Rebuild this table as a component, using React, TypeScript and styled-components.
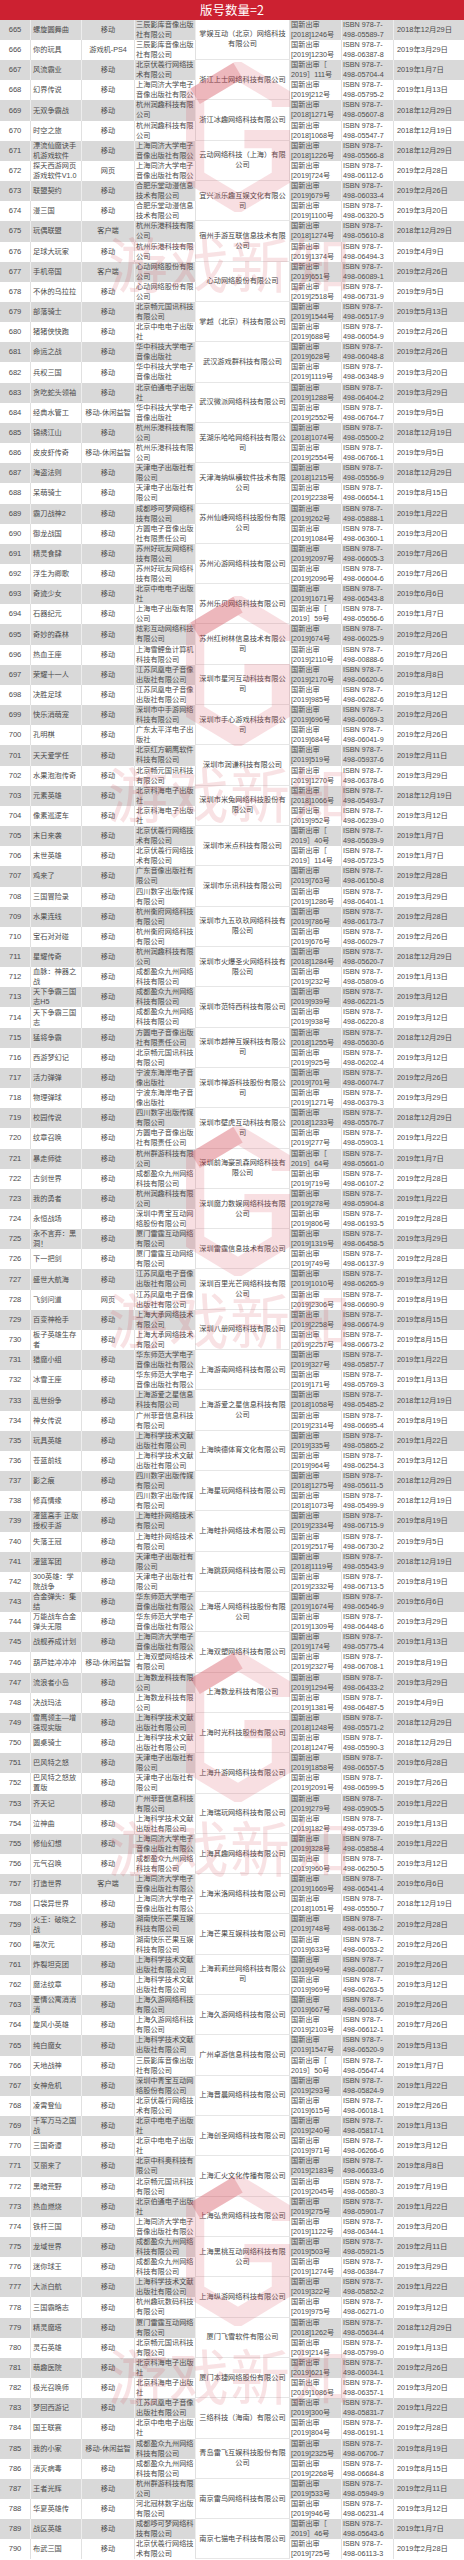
import React from 'react'
import styled, { createGlobalStyle } from 'styled-components'

const GlobalStyle = createGlobalStyle`
  * { box-sizing: border-box; }
  body {
    margin: 0;
    background: #fff;
    font-family: "Liberation Sans", "Noto Sans CJK SC", sans-serif;
  }
`

// no|name|platform|publisher|approval|isbn|date
const DATA = `
665|螺旋圆舞曲|移动|三辰影库音像出版社有限公司|[2018]1246号|05589-7|2018/12/29
666|你的玩具|游戏机-PS4|三辰影库音像出版社有限公司|[2019]1230号|06387-8|2019/3/29
667|风流霸业|移动|北京伏羲行网络技术有限公司|~2019］111号|05704-4|2019/1/7
668|幻界传说|移动|上海同济大学电子音像出版社有限公司|[2019]212号|05795-2|2019/1/13
669|无双争霸战|移动|杭州润趣科技有限公司|[2018]1271号|05607-8|2018/12/29
670|时空之旅|移动|杭州润趣科技有限公司|[2018]1068号|05547-7|2018/12/19
671|漂流仙魔诀手机游戏软件|移动|上海同济大学电子音像出版社有限公司|[2018]1226号|05566-8|2018/12/29
672|探天西游网页游戏软件V1.0|网页|上海同济大学电子音像出版社有限公司|[2019]724号|06112-6|2019/2/28
673|联盟契约|移动|合肥乐堂动漫信息技术有限公司|[2019]679号|06033-4|2019/2/26
674|漫三国|移动|合肥乐堂动漫信息技术有限公司|[2019]1100号|06320-5|2019/3/20
675|玩偶联盟|客户端|杭州乐港科技有限公司|[2018]1274号|05610-8|2018/12/29
676|足球大玩家|移动|杭州乐港科技有限公司|[2019]1374号|06494-3|2019/4/9
677|手机帝国|客户端|心动网络股份有限公司|[2019]651号|06089-1|2019/2/26
678|不休的乌拉拉|移动|心动网络股份有限公司|[2019]2518号|06731-9|2019/9/5
679|部落骑士|移动|北京畅元国讯科技有限公司|[2019]1544号|06517-9|2019/5/13
680|猪猪侠快跑|移动|北京中电电子出版社|[2019]688号|06054-9|2019/2/26
681|命运之战|移动|华中科技大学电子音像出版社|[2019]628号|06048-8|2019/2/26
682|兵权三国|移动|华中科技大学电子音像出版社|[2019]1119号|06348-9|2019/3/20
683|贪吃蛇头领袖|移动|北京伯通电子出版社|[2019]1288号|06404-2|2019/3/29
684|经典水管工|移动-休闲益智|华中科技大学电子音像出版社|[2019]2552号|06764-7|2019/9/5
685|锦绣江山|移动|杭州乐港科技有限公司|[2018]1074号|05500-2|2018/12/19
686|皮皮虾传奇|移动-休闲益智|杭州乐港科技有限公司|[2019]2554号|06766-1|2019/9/5
687|海盗法则|移动|天津电子出版社有限公司|[2018]1215号|05556-9|2018/12/29
688|呆萌骑士|移动|天津电子出版社有限公司|[2019]2238号|06654-1|2019/8/15
689|霸刀战神2|移动|成都哆可梦网络科技有限公司|[2019]262号|05888-1|2019/1/22
690|御龙战国|移动|方圆电子音像出版社有限责任公司|[2019]1084号|06360-1|2019/3/20
691|精灵食肆|移动|苏州好玩友网络科技有限公司|[2019]2097号|06605-3|2019/7/26
692|浮生为卿歌|移动|苏州好玩友网络科技有限公司|[2019]2096号|06604-6|2019/7/26
693|奇迹少女|移动|北京中电电子出版社|[2019]1671号|06543-8|2019/6/6
694|石器纪元|移动|上海电子出版有限公司|~2019］59号|05656-6|2019/1/7
695|奇妙的森林|移动|炫彩互动网络科技有限公司|[2019]674号|06025-9|2019/2/26
696|热血王座|移动|上海雪鲤鱼计算机科技有限公司|[2019]2110号|00888-6|2019/7/26
697|荣耀十一人|移动|江苏凤凰电子音像出版社有限公司|[2019]2170号|06620-6|2019/8/8
698|决胜足球|移动|江苏凤凰电子音像出版社有限公司|[2019]985号|06282-6|2019/3/12
699|快乐消萌宠|移动|深圳市中手游网络科技有限公司|[2019]696号|06069-3|2019/2/26
700|孔明棋|移动|广东太平洋电子出版社|[2019]684号|06041-9|2019/2/26
701|天天爱学任|移动|北京红方朝鹰软件科技有限公司|[2019]519号|05937-6|2019/2/11
702|水果泡泡传奇|移动|北京畅元国讯科技有限公司|[2019]1270号|06378-6|2019/3/29
703|元素英雄|移动|北京科海电子出版社|[2018]1066号|05493-7|2018/12/19
704|像素巡逻车|移动|北京科海电子出版社|[2019]952号|06239-0|2019/3/12
705|末日来袭|移动|北京伏羲行网络技术有限公司|~2019］40号|05639-9|2019/1/7
706|末世英雄|移动|北京伏羲行网络技术有限公司|~2019］114号|05723-5|2019/1/7
707|鸡来了|移动|广东音像出版社有限公司|[2019]763号|06150-8|2019/2/28
708|三国冒险录|移动|四川数字出版传媒有限公司|[2019]1286号|06401-1|2019/3/29
709|水果连线|移动|杭州衡府网络科技有限公司|[2019]786号|06173-7|2019/2/28
710|宝石对对碰|移动|杭州衡府网络科技有限公司|[2019]676号|06029-7|2019/2/26
711|星耀传奇|移动|杭州润趣科技有限公司|[2018]1284号|05620-7|2018/12/29
712|血脉：神器之战|移动|成都盈众九州网络科技有限公司|[2019]232号|05809-6|2019/1/13
713|天下争霸三国志H5|移动|成都盈众九州网络科技有限公司|[2019]939号|06221-5|2019/3/12
714|天下争霸三国志|移动|成都盈众九州网络科技有限公司|[2019]938号|06220-8|2019/3/12
715|猛将争霸|移动|方圆电子音像出版社有限责任公司|[2018]1255号|05630-6|2018/12/29
716|西游梦幻记|移动|北京畅元国讯科技有限公司|[2019]925号|06202-4|2019/3/12
717|活力弹弹|移动|宁波东海岸电子音像出版社|[2019]701号|06074-7|2019/2/26
718|物理弹球|移动|宁波东海岸电子音像出版社|[2019]1271号|06379-3|2019/3/29
719|校园传说|移动|四川数字出版传媒有限公司|[2018]1233号|05576-7|2018/12/29
720|纹章召唤|移动|方圆电子音像出版社有限责任公司|[2019]277号|05903-1|2019/1/22
721|暴走师徒|移动|杭州群游科技有限公司|~2019］64号|05661-0|2019/1/7
722|古剑世界|移动|成都盈众九州网络科技有限公司|[2019]719号|06107-2|2019/2/28
723|我的勇者|移动|杭州润趣科技有限公司|[2019]278号|05904-8|2019/1/22
724|永恒战场|移动|深圳中青宝互动网络股份有限公司|[2019]806号|06193-5|2019/2/28
725|永不言弃：黑洞！|移动|厦门雷霆互动网络有限公司|[2019]1319号|06458-5|2019/3/29
726|下一把剑|移动|厦门雷霆互动网络有限公司|[2019]749号|06137-9|2019/2/28
727|盛世大航海|移动|江苏凤凰电子音像出版社有限公司|[2019]1010号|06265-9|2019/3/12
728|飞剑问道|网页|江苏凤凰电子音像出版社有限公司|[2019]2306号|06690-9|2019/8/19
729|百变神枪手|移动|上海大承网络技术有限公司|[2019]2258号|06674-9|2019/8/15
730|板子英雄生存者|移动|上海大承网络技术有限公司|[2019]2257号|06673-2|2019/8/15
731|猎魔小组|移动|华东师范大学电子音像出版社有限公司|[2019]327号|05857-7|2019/1/22
732|冰雪王座|移动|华东师范大学电子音像出版社有限公司|[2019]171号|05769-3|2019/1/13
733|乱世纷争|移动|上海游爱之星信息科技有限公司|[2018]1058号|05485-2|2018/12/19
734|神女传说|移动|广州菲音信息科技有限公司|[2019]2314号|06695-4|2019/8/19
735|玩具英雄|移动|上海科学技术文献出版社有限公司|[2019]335号|05865-2|2019/1/22
736|苍蓝前线|移动|上海科学技术文献出版社有限公司|[2019]964号|06254-3|2019/3/12
737|影之痕|移动|四川数字出版传媒有限公司|[2018]1275号|05611-5|2018/12/29
738|修真情缘|移动|四川数字出版传媒有限公司|[2018]1073号|05499-9|2018/12/19
739|灌篮高手 正版授权手游|移动|上海蛙扑网络技术有限公司|[2019]2334号|06715-9|2019/8/19
740|失落王冠|移动|上海蛙扑网络技术有限公司|[2019]2517号|06730-2|2019/9/5
741|灌篮军团|移动|天津电子出版社有限公司|[2018]1119号|05543-9|2018/12/19
742|300英雄：学院战争|移动|天津电子出版社有限公司|[2019]2332号|06713-5|2019/8/19
743|合金弹头：集结|移动|华东师范大学电子音像出版社有限公司|[2019]1674号|06546-9|2019/6/6
744|万能战车合金弹头无限|移动|华东师范大学电子音像出版社有限公司|[2019]1309号|06448-6|2019/3/29
745|战舰养成计划|移动|上海同济大学电子音像出版社有限公司|[2019]174号|05775-4|2019/1/13
746|葫芦娃冲冲冲|移动-休闲益智|上海双塑网络技术有限公司|[2019]2327号|06708-1|2019/8/19
747|流浪者小岛|移动|上海数龙科技有限公司|[2019]1294号|06433-2|2019/3/29
748|决战玛法|移动|上海数龙科技有限公司|[2019]1381号|06487-5|2019/4/9
749|雪鹰领主—增强现实版|移动|上海科学技术文献出版社有限公司|[2018]1248号|05571-2|2018/12/29
750|圆桌骑士|移动|上海科学技术文献出版社有限公司|[2018]1247号|05590-3|2018/12/29
751|巴风特之怒|移动|天津电子出版社有限公司|[2019]1858号|06557-5|2019/6/28
752|巴风特之怒放置版|移动|天津电子出版社有限公司|[2019]2091号|06599-5|2019/7/26
753|齐天记|移动|广州菲音信息科技有限公司|[2019]279号|05905-5|2019/1/22
754|泣神曲|移动|上海科学技术文献出版社有限公司|[2019]182号|05739-6|2019/1/13
755|修仙幻想|移动|上海同济大学电子音像出版社有限公司|[2019]328号|05858-4|2019/1/22
756|元气召唤|移动|成都盈众九州网络科技有限公司|[2019]960号|06250-5|2019/3/12
757|打造世界|客户端|上海同济大学电子音像出版社有限公司|[2019]1669号|06541-4|2019/6/6
758|口袋异世界|移动|上海同济大学电子音像出版社有限公司|[2018]1051号|05550-7|2018/12/19
759|火王：破晓之战|移动|湖南快乐芒果互娱科技有限公司|[2019]748号|06136-2|2019/2/28
760|喵次元|移动|湖南快乐芒果互娱科技有限公司|[2019]633号|06053-2|2019/2/26
761|炸裂坦克团|移动|上海科学技术文献出版社有限公司|[2019]649号|06087-7|2019/2/26
762|魔法纹章|移动|上海科学技术文献出版社有限公司|[2019]969号|06263-5|2019/3/12
763|爱情公寓消消消|移动|上海久游网络科技有限公司|[2019]667号|06013-6|2019/2/26
764|旋风小英雄|移动|上海久游网络科技有限公司|[2019]2103号|06612-1|2019/7/26
765|纯白魔女|移动|上海科学技术文献出版社有限公司|[2019]1547号|06520-9|2019/5/13
766|天地战神|移动|三辰影库音像出版社有限公司|~2019］50号|05647-4|2019/1/7
767|女神危机|移动|深圳中青宝互动网络股份有限公司|[2019]293号|05824-9|2019/1/22
768|凌霄登仙|移动|北京伏羲行网络技术有限公司|[2019]615号|06018-1|2019/2/26
769|千军万马之国战|移动|北京中电电子出版社|[2019]240号|05817-1|2019/1/13
770|三国奇谭|移动|北京中电电子出版社|[2019]971号|06266-6|2019/3/12
771|艾丽来了|移动|北京中科奥科技有限公司|[2019]2183号|06633-6|2019/8/8
772|黑暗荒野|移动|北京畅元国讯科技有限公司|[2019]2045号|06580-3|2019/7/19
773|热血燃烧|移动|北京伯通电子出版社|[2019]275号|05901-7|2019/1/22
774|铁杆三国|移动|上海同济大学电子音像出版社有限公司|[2019]1122号|06344-1|2019/3/20
775|龙域世界|移动|成都盈众九州网络科技有限公司|[2019]503号|05921-5|2019/2/11
776|迷你球王|移动|成都盈众九州网络科技有限公司|[2019]1274号|06384-7|2019/3/29
777|大派白航|移动|上海科学技术文献出版社有限公司|[2019]322号|05852-2|2019/1/22
778|三国霸略志|移动|杭州趣玩数码科技有限公司|[2019]975号|06271-0|2019/3/12
779|精灵魔塔|移动|厦门雷霆互动网络有限公司|[2018]1262号|05634-4|2018/12/29
780|灵石英雄|移动|北京畅元国讯科技有限公司|[2019]214号|05799-0|2019/1/13
781|萌趣医院|移动|北京科海电子出版社|[2019]621号|06034-1|2019/2/26
782|极光召唤师|移动|北京科海电子出版社|[2019]1086号|06357-1|2019/3/20
783|梦回西游记|移动|江苏凤凰电子音像出版社有限公司|[2019]300号|05831-7|2019/1/22
784|国王联赛|移动|北京中电电子出版社|[2019]804号|06191-1|2019/2/28
785|我的小家|移动-休闲益智|成都盈众九州网络科技有限公司|[2019]2325号|06706-7|2019/8/19
786|消灭病毒|移动|成都盈众九州网络科技有限公司|[2019]2268号|06684-8|2019/8/15
787|王者光辉|移动|杭州群游科技有限公司|[2019]533号|05949-9|2019/2/11
788|华夏英雄传|移动|河北冠林数字出版有限公司|[2019]946号|06231-4|2019/3/12
789|战区英雄|移动|成都哆可梦网络科技有限公司|~2019］46号|05643-6|2019/1/7
790|布武三国|移动|北京伏羲行网络技术有限公司|[2019]725号|06113-3|2019/2/28
`

// one operator per pair of rows
const OPERATORS = [
  '掌娱互动（北京）网络科技有限公司', '浙江上士网络科技有限公司', '浙江冰趣网络科技有限公司',
  '云动网络科技（上海）有限公司', '宜兴派乐趣互娱文化有限公司', '宿州手游互联信息技术有限公司',
  '心动网络股份有限公司', '掌越（北京）科技有限公司', '武汉游戏群科技有限公司',
  '武汉微派网络科技有限公司', '芜湖乐哈哈网络科技有限公司', '天津海纳纵横软件技术有限公司',
  '苏州仙峰网络科技股份有限公司', '苏州沁游网络科技有限公司', '苏州乐贝网络科技有限公司',
  '苏州红树林信息技术有限公司', '深圳市星河互动科技有限公司', '深圳市手心游戏科技有限公司',
  '深圳市润谦科技有限公司', '深圳市米兔网络科技股份有限公司', '深圳市米点科技有限公司',
  '深圳市乐讯科技有限公司', '深圳市九五玖玖网络科技有限公司', '深圳市火爆圣火网络科技有限公司',
  '深圳市范特西科技有限公司', '深圳市越神互娱科技有限公司', '深圳市禅游科技股份有限公司',
  '深圳市壁虎互动科技有限公司', '深圳前海豪凯森网络科技有限公司', '深圳魔力数娱网络科技有限公司',
  '深圳雷霆信息技术有限公司', '深圳百里光芒网络科技有限公司', '深圳八册网络科技有限公司',
  '上海游南网络科技有限公司', '上海游爱之星信息科技有限公司', '上海映德体育文化有限公司',
  '上海星玩网络科技有限公司', '上海蛙扑网络技术有限公司', '上海跳跃网络科技有限公司',
  '上海塔人网络科技股份有限公司', '上海双塑网络科技有限公司', '上海数龙科技有限公司',
  '上海时光科技股份有限公司', '上海升游网络科技有限公司', '上海瑞玩网络科技有限公司',
  '上海其趣网络科技有限公司', '上海米洛网络科技有限公司', '上海芒果互娱科技有限公司',
  '上海莉莉丝网络科技有限公司', '上海久游网络科技有限公司', '广州卓游信息科技有限公司',
  '上海晋晨网络科技有限公司', '上海创圣网络科技有限公司', '上海汇火文化传播有限公司',
  '上海弘贵网络科技有限公司', '上海黑桃互动网络科技有限公司', '上海纵游网络科技有限公司',
  '厦门飞雪软件有限公司', '厦门本捷网络股份有限公司', '三络科技（海南）有限公司',
  '青岛雷飞互娱科技股份有限公司', '南京雷鸟网络科技有限公司', '南京七猫电子科技有限公司',
]

const rows = DATA.trim().split('\n').map(l => l.split('|'))

const approval = (s: string) =>
  s.startsWith('~') ? `国新出审［\n${s.slice(1)}` : `国新出审\n${s}`

const dateText = (s: string) => {
  const [y, m, d] = s.split('/')
  return `${y}年${m}月${d}日`
}

const MARK_TOPS = [62, 596, 1126, 1652, 2176]
const TEXT_TOPS = [226, 756, 1282, 1810, 2338]

const Page = styled.div`
  position: relative;
  width: 464px;
  height: 2560px;
  overflow: hidden;
  background: #fff;
`

const Title = styled.div`
  height: 19.8px;
  background: #cc2131;
  color: #fff;
  font-family: "Noto Sans CJK SC", sans-serif;
  font-size: 12.5px;
  line-height: 19.8px;
  text-align: center;
`

const Table = styled.div`
  display: grid;
  grid-template-columns: 31px 51px 53px 61px 94px 52px 52px 70px;
  grid-auto-rows: 20.16px;
  font-size: 7.2px;
  line-height: 10px;
  color: #4b4b4b;
`

const Cell = styled.div<{ $alt: boolean }>`
  display: flex;
  align-items: center;
  justify-content: flex-start;
  padding: 0 2px;
  overflow: hidden;
  white-space: pre-line;
  background: ${p => (p.$alt ? '#d9d9d9' : '#fff')};
  border-right: 1px solid ${p => (p.$alt ? '#ededed' : '#e1e1e1')};
`

const NumCell = styled(Cell)`
  justify-content: center;
  font-size: 7.6px;
`

const CenterCell = styled(Cell)`
  justify-content: center;
  text-align: center;
`

const PubCell = styled(Cell)`
  align-items: flex-start;
  padding: 0 1px;
`

const InfoCell = styled(Cell)`
  align-items: flex-start;
  padding: 0 1px;
`

const DateCell = styled(Cell)`
  padding-left: 3px;
  white-space: nowrap;
  font-size: 7.4px;
  border-right: none;
`

const OperatorCell = styled.div`
  grid-row: span 2;
  display: flex;
  align-items: center;
  justify-content: center;
  text-align: center;
  padding: 0 2px;
  background: #fff;
  border-right: 1px solid #e1e1e1;
  border-bottom: 1px solid #e6e6e6;
  color: #444;
`

const Mark = styled.svg<{ $top: number }>`
  position: absolute;
  left: 184px;
  top: ${p => p.$top}px;
  width: 108px;
  height: 150px;
  pointer-events: none;
`

const MarkText = styled.div<{ $top: number }>`
  position: absolute;
  left: 108px;
  top: ${p => p.$top}px;
  font-family: "Noto Sans CJK SC", sans-serif;
  font-size: 60px;
  line-height: 72px;
  letter-spacing: 1px;
  color: rgba(214, 84, 96, 0.17);
  white-space: nowrap;
  pointer-events: none;
`

const Logo = ({ top }: { top: number }) => (
  <Mark $top={top} viewBox="0 0 100 140">
    <path
      d="M90 42 L90 32 L50 8 L10 32 L10 108 L50 132 L90 108 L90 72 L56 72"
      fill="none"
      stroke="rgba(222, 96, 108, 0.2)"
      strokeWidth="17"
      strokeLinejoin="miter"
    />
    <path d="M10 32 L50 8" stroke="rgba(200, 40, 55, 0.22)" strokeWidth="17" />
  </Mark>
)

const App = () => {
  return (
    <Page>
      <GlobalStyle />
      <Title>版号数量=2</Title>
      <Table>
        {rows.map(([no, name, platform, pub, appr, isbn, date], i) => {
          const alt = i % 2 === 0
          return (
            <React.Fragment key={no}>
              <NumCell $alt={alt}>{no}</NumCell>
              <Cell $alt={alt}>{name}</Cell>
              <CenterCell $alt={alt}>{platform}</CenterCell>
              <PubCell $alt={alt}>{pub}</PubCell>
              {alt && <OperatorCell>{OPERATORS[i / 2]}</OperatorCell>}
              <InfoCell $alt={alt}>{approval(appr)}</InfoCell>
              <InfoCell $alt={alt}>{`ISBN 978-7-\n498-${isbn}`}</InfoCell>
              <DateCell $alt={alt}>{dateText(date)}</DateCell>
            </React.Fragment>
          )
        })}
      </Table>
      {MARK_TOPS.map(t => (
        <Logo key={t} top={t} />
      ))}
      {TEXT_TOPS.map(t => (
        <MarkText key={t} $top={t}>游戏新知</MarkText>
      ))}
    </Page>
  )
}

export default App
